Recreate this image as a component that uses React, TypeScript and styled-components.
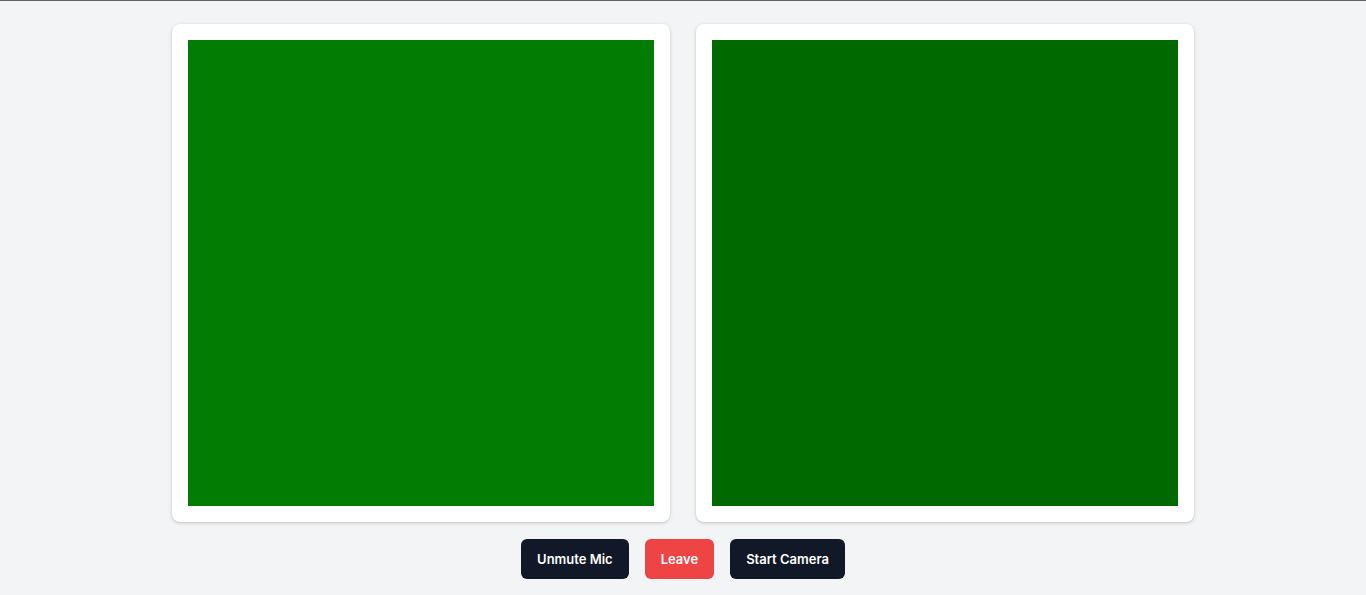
import React from "react";
import styled, { createGlobalStyle } from "styled-components";

const Global = createGlobalStyle`
  html, body { margin: 0; padding: 0; background: #f3f4f6; }
  body { font-family: Inter, "Noto Sans", sans-serif; }
`;

const Page = styled.div`
  min-height: 595px;
  box-sizing: border-box;
  border-top: 1px solid #5f6368;
  background: #f3f4f6;
  display: flex;
  flex-direction: column;
  align-items: center;
  padding-top: 23px;
  gap: 17px;
`;

const Grid = styled.div`
  display: grid;
  grid-template-columns: 498px 498px;
  gap: 26px;
`;

const Card = styled.div`
  background: #ffffff;
  border-radius: 8px;
  box-shadow: 0 1px 4px rgba(0, 0, 0, 0.14), 0 1px 2px rgba(0, 0, 0, 0.08);
  padding: 16px;
  box-sizing: border-box;
  width: 498px;
  height: 498px;
  display: flex;
`;

const Video = styled.div<{ $color: string }>`
  flex: 1;
  background: ${(p) => p.$color};
`;

const Controls = styled.div`
  display: flex;
  gap: 16px;
  justify-content: center;
`;

const Button = styled.button<{ $variant?: "danger" | "dark" }>`
  height: 40px;
  padding: 0 16px;
  border: none;
  border-radius: 6px;
  font-family: Inter, "Noto Sans", sans-serif;
  font-size: 13px;
  font-weight: 600;
  color: #ffffff;
  background: ${(p) => (p.$variant === "danger" ? "#ef4444" : "#111827")};
  cursor: pointer;
`;

export default function App() {
  return (
    <>
      <Global />
      <Page>
        <Grid>
          <Card>
            <Video $color="#027c02" />
          </Card>
          <Card>
            <Video $color="#006a00" />
          </Card>
        </Grid>
        <Controls>
          <Button $variant="dark">Unmute Mic</Button>
          <Button $variant="danger">Leave</Button>
          <Button $variant="dark">Start Camera</Button>
        </Controls>
      </Page>
    </>
  );
}
